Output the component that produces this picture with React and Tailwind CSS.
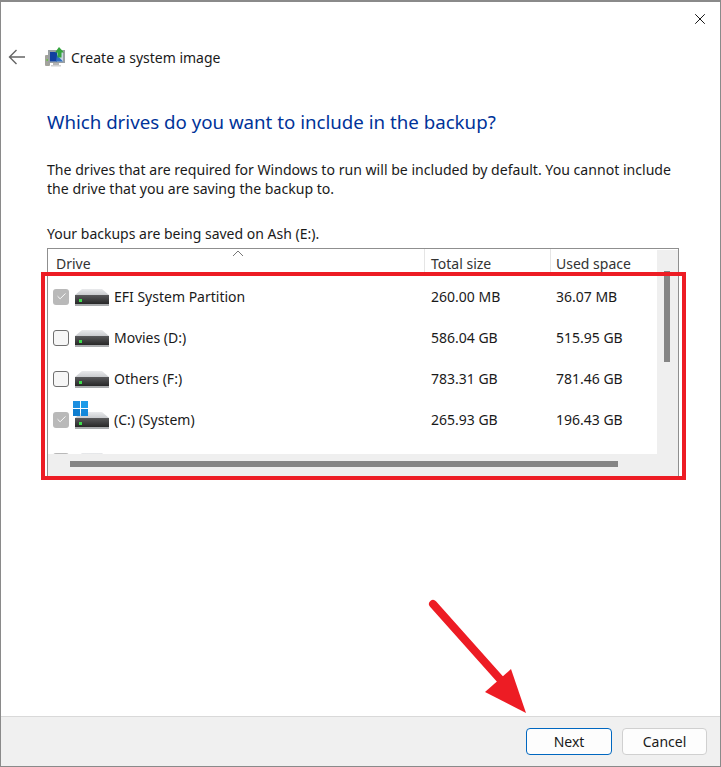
import { X, Check } from 'lucide-react';

const drives = [
  { name: 'EFI System Partition', total: '260.00 MB', used: '36.07 MB', locked: true },
  { name: 'Movies (D:)', total: '586.04 GB', used: '515.95 GB' },
  { name: 'Others (F:)', total: '783.31 GB', used: '781.46 GB' },
  { name: '(C:) (System)', total: '265.93 GB', used: '196.43 GB', locked: true, system: true },
  { name: '', total: '', used: '', locked: true },
];

function DriveIcon({ system }) {
  return (
    <div className="relative w-[36px] h-[18px] shrink-0">
      <svg width="36" height="18" viewBox="0 0 36 18">
        <defs>
          <linearGradient id="driveTop" x1="0" y1="0" x2="0" y2="1">
            <stop offset="0" stopColor="#e9eaec" />
            <stop offset="1" stopColor="#c9cbce" />
          </linearGradient>
          <linearGradient id="driveBody" x1="0" y1="0" x2="0" y2="1">
            <stop offset="0" stopColor="#59595b" />
            <stop offset="1" stopColor="#222" />
          </linearGradient>
        </defs>
        <path d="M8 1H28L35 7H1Z" fill="url(#driveTop)" />
        <rect x="1" y="7" width="34" height="10" fill="url(#driveBody)" />
        <rect x="1" y="16" width="34" height="2" fill="#a9abad" />
        <rect x="5" y="11" width="3" height="3" fill="#3fdc4c" />
      </svg>
      {system && (
        <svg className="absolute left-[-1px] top-[-10px]" width="15" height="15" viewBox="0 0 15 15">
          <rect x="0" y="0" width="7" height="7" fill="#1d8fe0" />
          <rect x="8" y="0" width="7" height="7" fill="#1d9be8" />
          <rect x="0" y="8" width="7" height="7" fill="#0f7ed0" />
          <rect x="8" y="8" width="7" height="7" fill="#1488da" />
        </svg>
      )}
    </div>
  );
}

function DriveRow({ drive }) {
  return (
    <div className="flex items-center h-[41px] shrink-0 text-[14px] text-[#1a1a1a]">
      <div className="w-[377px] flex items-center pl-[5px] shrink-0">
        {drive.locked ? (
          <div className="w-[16px] h-[16px] rounded-[3px] bg-[#b9b9b9] flex items-center justify-center shrink-0">
            <Check size={11} color="#fff" strokeWidth={2} />
          </div>
        ) : (
          <div className="w-[16px] h-[16px] rounded-[3px] border border-[#6f6f6f] bg-[#f6f6f6] shrink-0" />
        )}
        <div className="ml-[5px]"><DriveIcon system={drive.system} /></div>
        <span className="ml-[4px]">{drive.name}</span>
      </div>
      <div className="w-[125px] pl-[6px] shrink-0">{drive.total}</div>
      <div className="pl-[6px]">{drive.used}</div>
    </div>
  );
}

function SystemImageIcon() {
  return (
    <svg width="21" height="20" viewBox="0 0 21 20">
      <rect x="0" y="8" width="5" height="11" rx="1" fill="#a3a39c" />
      <rect x="1.5" y="12" width="2" height="2" fill="#6fbf4a" />
      <rect x="3" y="3" width="17" height="13" fill="#9aa0a3" />
      <rect x="5" y="5" width="13" height="9.5" fill="#c9d6e2" />
      <path d="M5 5H12V14.5H5Z" fill="#12409f" />
      <path d="M12 8L18 14.5H11Z" fill="#2e6fc2" />
      <rect x="8" y="16" width="6" height="2" fill="#b5b5b5" />
      <rect x="6" y="18" width="10" height="1.5" fill="#d0d0d0" />
      <path d="M14 0L19 5.5H16.5V10.5H12.5V5.5H10Z" fill="#35a53d" />
    </svg>
  );
}

export default function App() {
  return (
    <div className="relative w-[721px] h-[767px] bg-white flex flex-col border-x border-b border-t-2 border-[#8a8a8a] overflow-hidden font-['Noto_Sans',sans-serif]">
      <div className="flex justify-end pr-[11px] pt-[8px] h-[33px]">
        <X size={18} color="#111" strokeWidth={1.3} />
      </div>

      <div className="flex items-center h-[44px] pl-[7px]">
        <svg width="18" height="16" viewBox="0 0 18 16">
          <path d="M1.5 8H17M8.5 1L1.5 8L8.5 15" fill="none" stroke="#666" strokeWidth="1.4" />
        </svg>
        <div className="ml-[19px] flex"><SystemImageIcon /></div>
        <span className="ml-[5px] text-[14px] text-[#1a1a1a]">Create a system image</span>
      </div>

      <div className="pl-[46px] pr-[40px] flex flex-col flex-1">
        <h1 className="mt-[29px] text-[18.7px] leading-[28px] text-[#003399]">Which drives do you want to include in the backup?</h1>
        <p className="mt-[24px] text-[14.1px] leading-[19px] text-[#1a1a1a] whitespace-nowrap">
          The drives that are required for Windows to run will be included by default. You cannot include
          <br />
          the drive that you are saving the backup to.
        </p>
        <p className="mt-[26px] text-[14px] leading-[19px] text-[#1a1a1a]">Your backups are being saved on Ash (E:).</p>

        <div className="mt-[5px] w-[632px] h-[229px] border border-[#8f8f8f] flex flex-col">
          <div className="flex flex-1 min-h-0">
            <div className="w-[609px] flex flex-col overflow-hidden">
              <div className="relative flex h-[27px] shrink-0 text-[14px] text-[#333] items-end">
                <div className="w-[377px] pl-[8px] pb-[2px] shrink-0 border-r border-[#e5e5e5] h-full flex items-end">Drive</div>
                <div className="w-[126px] pl-[6px] pb-[2px] shrink-0 border-r border-[#e5e5e5] h-full flex items-end">Total size</div>
                <div className="pl-[5px] pb-[2px]">Used space</div>
                <svg className="absolute left-[184px] top-[1px]" width="12" height="7" viewBox="0 0 12 7">
                  <path d="M1 6L6 1L11 6" fill="none" stroke="#777" strokeWidth="1" />
                </svg>
              </div>
              {drives.map((d, i) => (
                <DriveRow key={i} drive={d} />
              ))}
            </div>
            <div className="flex-1 bg-[#efefef] mt-[1px] pl-[7px] pt-[21px]">
              <div className="w-[6px] h-[91px] bg-[#858585]" />
            </div>
          </div>
          <div className="h-[22px] shrink-0 bg-[#efefef] pl-[22px] pt-[7px]">
            <div className="w-[548px] h-[6px] bg-[#858585]" />
          </div>
        </div>
      </div>

      <div className="h-[50px] shrink-0 bg-[#f0f0f0] border-t border-[#d9d9d9] flex items-center justify-end pr-[13px] gap-[10px] text-[14px] text-[#1a1a1a]">
        <button className="w-[86px] h-[27px] rounded-[4px] bg-[#fdfdfd] border border-[#0067c0]">Next</button>
        <button className="w-[85px] h-[27px] rounded-[4px] bg-[#fdfdfd] border border-[#d0d0d0]">Cancel</button>
      </div>

      {/* annotations drawn over the screenshot */}
      <div className="absolute left-[40px] top-[270px] w-[645px] h-[208px] border-4 border-[#ed1c24]" />
      <svg className="absolute left-[419px] top-[588px]" width="120" height="130" viewBox="0 0 120 130">
        <path d="M13 14L88 98" stroke="#ed1c24" strokeWidth="8" strokeLinecap="round" fill="none" />
        <path d="M65 102L91 79L106 123Z" fill="#ed1c24" />
      </svg>
    </div>
  );
}
